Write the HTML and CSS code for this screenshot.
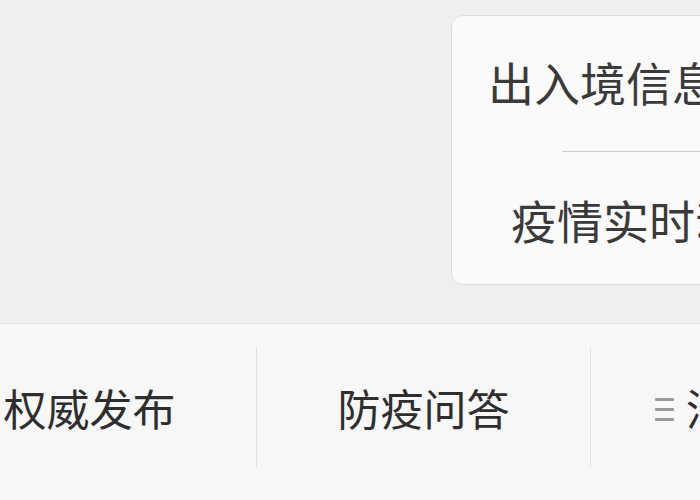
FILE: index.html
```html
<!DOCTYPE html>
<html lang="zh-CN">
<head>
<meta charset="utf-8">
<link rel="stylesheet" href="styles.css">
</head>
<body>
<div class="page">
  <div class="content">
    <div class="popup">
      <div class="popup-item">出入境信息查询</div>
      <div class="popup-sep"></div>
      <div class="popup-item">疫情实时动态</div>
    </div>
  </div>
  <div class="menubar">
    <div class="menu-item">权威发布</div>
    <div class="menu-sep"></div>
    <div class="menu-item">防疫问答</div>
    <div class="menu-sep"></div>
    <div class="menu-item more"><span class="burger"><i></i><i></i><i></i></span>消杀指南</div>
  </div>
</div>
</body>
</html>
```
FILE: styles.css
```css
html, body {
  margin: 0;
  padding: 0;
}
body {
  width: 700px;
  height: 500px;
  overflow: hidden;
  background: #efefef;
  font-family: "Noto Sans CJK SC", "Noto Sans", sans-serif;
  color: #333;
}
.page {
  display: flex;
  flex-direction: column;
  height: 500px;
}
.content {
  height: 323px;
  position: relative;
  flex: none;
}
.popup {
  position: absolute;
  left: 451px;
  top: 15px;
  width: 396px;
  height: 270px;
  box-sizing: border-box;
  background: #fafafa;
  border: 1px solid #dcdcdc;
  border-radius: 12px;
  display: flex;
  flex-direction: column;
  align-items: center;
}
.popup-item {
  flex: 1;
  display: flex;
  align-items: center;
  justify-content: center;
  font-size: 46px;
  line-height: 1;
  color: #3a3a3a;
  white-space: nowrap;
}
.popup-item:first-child {
  padding-bottom: 4px;
}
.popup-item:last-child {
  padding-top: 2px;
}
.popup-sep {
  width: 174px;
  height: 1px;
  background: #cfcfcf;
}
.menubar {
  flex: 1;
  background: #f7f7f7;
  border-top: 1px solid #e3e3e3;
  display: flex;
  align-items: center;
  margin-left: -77px;
  padding-bottom: 10px;
  overflow: hidden;
}
.menu-item {
  width: 333px;
  flex: none;
  display: flex;
  align-items: center;
  justify-content: center;
  font-size: 43px;
  line-height: 1;
  color: #2e2e2e;
  white-space: nowrap;
}
.menu-sep {
  width: 1px;
  height: 120px;
  background: #e2e2e2;
  flex: none;
}
.more {
  justify-content: flex-start;
  padding-left: 64px;
  box-sizing: border-box;
}
.burger {
  display: flex;
  flex-direction: column;
  gap: 7px;
  width: 19px;
  margin-right: 12px;
  margin-top: 4px;
}
.burger i {
  display: block;
  height: 3px;
  background: #9a9a9a;
  border-radius: 1px;
}
```
